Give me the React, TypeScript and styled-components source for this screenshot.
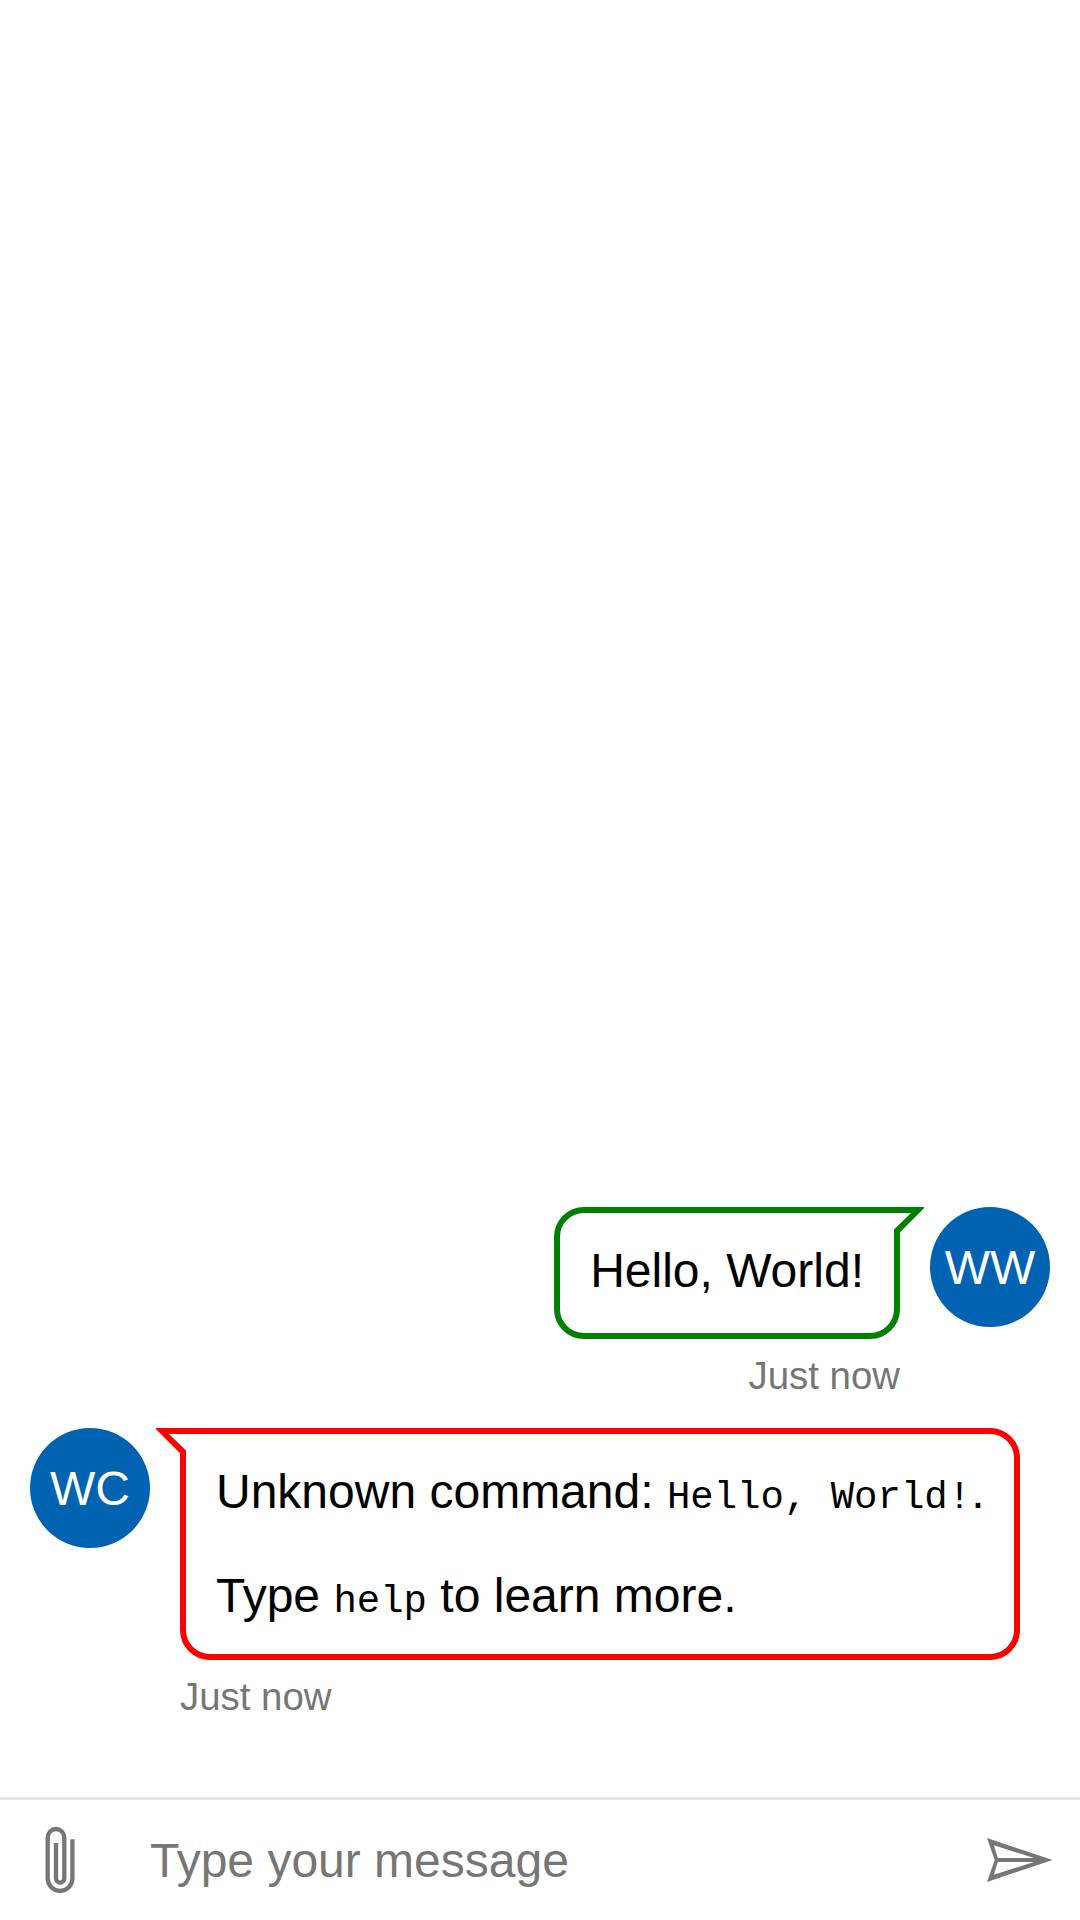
import React from "react";
import styled, { createGlobalStyle } from "styled-components";

const GlobalStyle = createGlobalStyle`
  *, *::before, *::after { box-sizing: border-box; }
  body { margin: 0; background: #fff; }
`;

const Chat = styled.main`
  display: flex;
  flex-direction: column;
  height: 1920px;
  width: 1080px;
  overflow: hidden;
  background: #fff;
  color: #000;
  font-family: "Liberation Sans", Arial, sans-serif;
  font-size: 48px;
`;

const Transcript = styled.section`
  flex: 1;
  display: flex;
  flex-direction: column;
  justify-content: flex-end;
  gap: 30px;
  padding: 0 30px 78px;
`;

const Activity = styled.article<{ $fromUser?: boolean }>`
  display: flex;
  flex-direction: ${(p) => (p.$fromUser ? "row-reverse" : "row")};
  align-items: flex-start;
  gap: 30px;
`;

const Avatar = styled.div`
  flex: none;
  display: flex;
  align-items: center;
  justify-content: center;
  width: 120px;
  height: 120px;
  padding-top: 2px;
  border-radius: 50%;
  background: #0063b1;
  color: #fff;
  line-height: 56px;
`;

const Content = styled.div<{ $fromUser?: boolean }>`
  display: flex;
  flex-direction: column;
  align-items: ${(p) => (p.$fromUser ? "flex-end" : "flex-start")};
`;

const Bubble = styled.div<{ $fromUser?: boolean }>`
  position: relative;
  display: flex;
  flex-direction: column;
  gap: 48px;
  min-height: 132px;
  padding: 30px;
  border: 6px solid ${(p) => (p.$fromUser ? "green" : "red")};
  border-radius: ${(p) => (p.$fromUser ? "30px 0 30px 30px" : "0 30px 30px 30px")};
  line-height: 56px;
`;

const NubShape = styled.svg<{ $fromUser?: boolean }>`
  position: absolute;
  top: -6px;
  ${(p) => (p.$fromUser ? "right: -30px;" : "left: -30px; transform: scaleX(-1);")}
  width: 30px;
  height: 26px;
  color: ${(p) => (p.$fromUser ? "green" : "red")};
`;

const Paragraph = styled.p`
  margin: 0;
  height: 56px;
  white-space: nowrap;
`;

const Code = styled.code`
  font-family: "Liberation Mono", "Courier New", monospace;
  font-size: 39px;
  line-height: 1;
`;

const Timestamp = styled.time`
  margin-top: 15px;
  height: 44px;
  line-height: 44px;
  font-size: 38.4px;
  color: #767676;
`;

const SendBox = styled.form`
  display: flex;
  height: 123px;
  border-top: 3px solid #e6e6e6;
`;

const IconButton = styled.button`
  flex: none;
  width: 120px;
  height: 120px;
  padding: 0;
  border: 0;
  background: transparent;
  color: #767676;

  svg { display: block; }
`;

const MessageInput = styled.input`
  flex: 1;
  min-width: 0;
  padding: 0 30px;
  border: 0;
  outline: 0;
  background: transparent;
  font: inherit;

  &::placeholder { color: #767676; opacity: 1; }
`;

function Nub({ fromUser }: { fromUser?: boolean }) {
  return (
    <NubShape $fromUser={fromUser} viewBox="0 0 30 26" aria-hidden="true">
      <path d="M0 6H17.5L0 23.5Z" fill="#fff" />
      <path d="M0 0H30V1.2L6 25.2V26H0V22.5L17 6H0Z" fill="currentColor" />
    </NubShape>
  );
}

function Message({
  initials,
  fromUser,
  children,
}: {
  initials: string;
  fromUser?: boolean;
  children: React.ReactNode;
}) {
  return (
    <Activity $fromUser={fromUser}>
      <Avatar>{initials}</Avatar>
      <Content $fromUser={fromUser}>
        <Bubble $fromUser={fromUser}>
          <Nub fromUser={fromUser} />
          {children}
        </Bubble>
        <Timestamp>Just now</Timestamp>
      </Content>
    </Activity>
  );
}

export default function App() {
  return (
    <>
      <GlobalStyle />
      <Chat>
        <Transcript>
          <Message initials="WW" fromUser>
            <Paragraph>Hello, World!</Paragraph>
          </Message>
          <Message initials="WC">
            <Paragraph>
              Unknown command: <Code>Hello, World!</Code>.
            </Paragraph>
            <Paragraph>
              Type <Code>help</Code> to learn more.
            </Paragraph>
          </Message>
        </Transcript>
        <SendBox onSubmit={(e) => e.preventDefault()}>
          <IconButton type="button" aria-label="Upload file">
            <svg width="120" height="120" viewBox="0 0 120 120" fill="none">
              <path
                d="M72.4 39.3V78.6a12.35 12.35 0 0 1-24.7 0V37.3a8.3 8.3 0 0 1 16.6 0V78.4a4.15 4.15 0 0 1-8.3 0V43"
                stroke="currentColor"
                strokeWidth="4.3"
              />
            </svg>
          </IconButton>
          <MessageInput placeholder="Type your message" />
          <IconButton type="submit" aria-label="Send">
            <svg width="120" height="120" viewBox="0 0 120 120">
              <path
                fill="currentColor"
                fillRule="evenodd"
                d="M27 38 92.6 60 27 82 34.7 60ZM33.8 45.2 37.8 58H74ZM37.8 62 33.8 74.8 74 62Z"
              />
            </svg>
          </IconButton>
        </SendBox>
      </Chat>
    </>
  );
}
